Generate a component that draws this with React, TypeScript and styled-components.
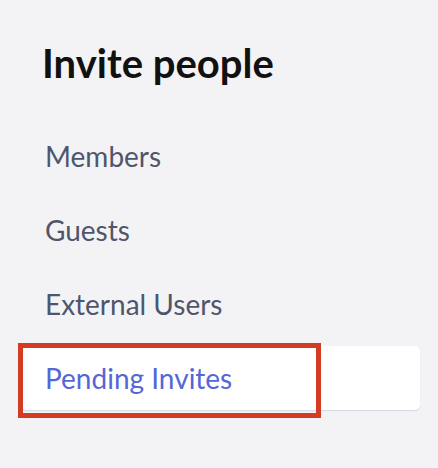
import React from 'react'
import styled, { createGlobalStyle } from 'styled-components'

const GlobalStyle = createGlobalStyle`
  html, body {
    margin: 0;
    padding: 0;
    background: #f3f3f6;
    font-family: Lato, 'Noto Sans', sans-serif;
  }
`

const Page = styled.div`
  width: 438px;
  height: 468px;
  box-sizing: border-box;
  padding: 39px 18px 0 21px;
`

const Title = styled.h1`
  margin: 0 0 37px 21px;
  font-size: 40px;
  line-height: 48px;
  font-weight: 700;
  color: #111111;
`

const Nav = styled.nav`
  display: flex;
  flex-direction: column;
  gap: 10px;
`

const Item = styled.div<{ $active?: boolean }>`
  position: relative;
  height: 64px;
  display: flex;
  align-items: center;
  padding-left: 24px;
  border-radius: 5px;
  font-size: 28px;
  color: ${(p) => (p.$active ? '#5566d6' : '#4f566b')};
  background: ${(p) => (p.$active ? '#ffffff' : 'transparent')};
  box-shadow: ${(p) => (p.$active ? '0 1px 1px rgba(60, 80, 110, 0.16)' : 'none')};
`

const Highlight = styled.div`
  position: absolute;
  left: -3px;
  top: -3px;
  width: 303px;
  height: 75px;
  box-sizing: border-box;
  border: 5px solid #d33b23;
  pointer-events: none;
`

const items = ['Members', 'Guests', 'External Users', 'Pending Invites']

export default function App() {
  return (
    <Page>
      <GlobalStyle />
      <Title>Invite people</Title>
      <Nav>
        {items.map((label) => {
          const active = label === 'Pending Invites'
          return (
            <Item key={label} $active={active}>
              {label}
              {active && <Highlight />}
            </Item>
          )
        })}
      </Nav>
    </Page>
  )
}
